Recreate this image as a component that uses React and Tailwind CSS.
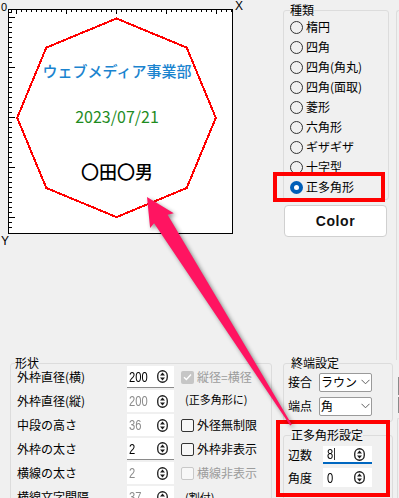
import React from 'react';

const UI = "font-['Noto_Sans_CJK_JP','Noto_Sans_CJK_SC',sans-serif]";

function SpinIcon() {
  return (
    <svg width="11" height="13" viewBox="0 0 11 13">
      <rect x="0.75" y="0.75" width="9.5" height="11.5" rx="4.75" fill="white" stroke="#1a1a1a" strokeWidth="1.3" />
      <path d="M5.5 2.6 L8 5.4 H3 Z" fill="#1a1a1a" />
      <path d="M5.5 10.4 L8 7.6 H3 Z" fill="#1a1a1a" />
    </svg>
  );
}

function SpinBox({ value, disabled = false, underline = false, focus = false, wide = false, small = false, cursor = false }) {
  const size = wide
    ? small
      ? 'w-[49px] h-[18px]'
      : 'w-[49px] h-[19px]'
    : 'w-[47px] h-[22px]';
  const line = focus ? 'border-b-2 border-[#0067c0]' : underline ? 'border-b border-[#8a8a8a]' : '';
  return (
    <div className={`flex shrink-0 items-center bg-white ${size} ${line} ${wide ? 'pl-[4px]' : 'pl-[2px]'}`}>
      <span className="flex-1">
        <span
          className={`inline-flex origin-left scale-x-[0.8] items-center text-[14px] leading-none font-['Liberation_Sans',sans-serif] ${disabled ? 'text-[#8c8c8c]' : 'text-black'}`}
        >
          {value}
          {cursor && <span className="ml-[1px] inline-block h-[12px] w-[1px] bg-black" />}
        </span>
      </span>
      <span className={`flex ${wide ? 'mr-[7px]' : 'mr-[6px]'}`}>
        <SpinIcon />
      </span>
    </div>
  );
}

function CheckBox({ checked = false, disabled = false }) {
  if (checked) {
    return (
      <span className="flex h-[13px] w-[13px] items-center justify-center rounded-[2px] bg-[#c6c6c6]">
        <svg width="9" height="8" viewBox="0 0 9 8">
          <path d="M1 4.2 L3.4 6.5 L8 1.5" fill="none" stroke="white" strokeWidth="1.4" />
        </svg>
      </span>
    );
  }
  return (
    <span
      className={`h-[13px] w-[13px] rounded-[2px] border ${disabled ? 'border-[#c8c8c8] bg-[#f7f7f7]' : 'border-[#333333] bg-[#f7f7f7]'}`}
    />
  );
}

function CheckLabel({ label, checked, disabled }) {
  return (
    <div className="ml-[7px] flex items-center">
      <CheckBox checked={checked} disabled={disabled} />
      <span className={`ml-[3px] leading-[14px] ${disabled ? 'text-[#9c9c9c]' : 'text-black'}`}>{label}</span>
    </div>
  );
}

function ShapeRow({ label, value, disabled, underline, right }) {
  return (
    <div className="flex h-[22px] shrink-0 items-center">
      <span className="w-[110px] shrink-0 leading-[14px]">{label}</span>
      <SpinBox value={value} disabled={disabled} underline={underline} />
      {right}
    </div>
  );
}

function Radio({ label, checked }) {
  return (
    <div className="flex h-[20px] items-center">
      {checked ? (
        <span className="flex h-[13px] w-[13px] items-center justify-center rounded-full bg-[#005fb8]">
          <span className="h-[5px] w-[5px] rounded-full bg-white" />
        </span>
      ) : (
        <span className="h-[13px] w-[13px] rounded-full border border-[#333333]" />
      )}
      <span className="ml-[3px] leading-[14px]">{label}</span>
    </div>
  );
}

function Combo({ text }) {
  return (
    <div className="flex h-[19px] w-[53px] shrink-0 items-center rounded-[2px] border border-[#9a9a9a] bg-white">
      <span className="w-[40px] overflow-hidden whitespace-nowrap pl-[1px] leading-[14px]">{text}</span>
      <svg width="9" height="6" viewBox="0 0 9 6" className="ml-[1px]">
        <path d="M0.5 0.8 L4.5 4.8 L8.5 0.8" fill="none" stroke="#606060" strokeWidth="1" />
      </svg>
    </div>
  );
}

function Canvas() {
  const cx = 116.5;
  const cy = 117.8;
  const r = 99.3;
  const pts = Array.from({ length: 8 }, (_, k) => {
    const a = ((-90 + 45 * k) * Math.PI) / 180;
    return `${(cx + r * Math.cos(a)).toFixed(1)},${(cy + r * Math.sin(a)).toFixed(1)}`;
  }).join(' ');
  const ticks = [];
  for (let x = 11; x <= 231; x += 5) {
    const long = (x - 16) % 50 === 0;
    ticks.push(<line key={'t' + x} x1={x + 0.5} y1={10} x2={x + 0.5} y2={long ? 14 : 12} />);
  }
  for (let y = 12; y <= 231; y += 5) {
    const long = (y - 17) % 50 === 0;
    ticks.push(<line key={'l' + y} x1={9} y1={y + 0.5} x2={long ? 15 : 12} y2={y + 0.5} />);
  }
  return (
    <svg width="250" height="250" viewBox="0 0 250 250" className="block shrink-0">
      <rect x="8.5" y="9.5" width="224" height="224" fill="white" stroke="black" strokeWidth="1" />
      <g stroke="black" strokeWidth="1" shapeRendering="crispEdges">
        {ticks}
      </g>
      <polygon points={pts} fill="none" stroke="#ff0000" strokeWidth="2" shapeRendering="crispEdges" />
      <text x="117" y="77" textAnchor="middle" fontSize="15" fill="#1b84cf" fontWeight="500" fontFamily="'Noto Sans CJK JP', sans-serif">
        ウェブメディア事業部
      </text>
      <text x="117" y="123" textAnchor="middle" fontSize="16" fill="#1f8c1f" fontFamily="'Noto Sans CJK JP', sans-serif">
        2023/07/21
      </text>
      <text x="117" y="179" textAnchor="middle" fontSize="18" fill="#000000" fontWeight="500" fontFamily="'Noto Sans CJK JP', sans-serif">
        〇田〇男
      </text>
      <text x="1" y="11" fontSize="11" fill="black" fontFamily="'Liberation Sans', sans-serif">0</text>
      <text x="235" y="10" fontSize="12" fill="black" fontFamily="'Liberation Sans', sans-serif">X</text>
      <text x="1" y="245" fontSize="12" fill="black" fontFamily="'Liberation Sans', sans-serif">Y</text>
    </svg>
  );
}

const kinds = ['楕円', '四角', '四角(角丸)', '四角(面取)', '菱形', '六角形', 'ギザギザ', '十字型', '正多角形'];

export default function App() {
  return (
    <div className={`relative h-[498px] w-[399px] overflow-hidden bg-[#f0f0f0] text-[12px] text-black ${UI}`}>
      <div className="flex h-full">
        <div className="flex w-[396px] shrink-0 flex-col">
          <div className="flex h-[350px] shrink-0">
            <Canvas />
            <div className="ml-[33px] flex w-[106px] shrink-0 flex-col pt-[3px]">
              <fieldset className="h-[197px] rounded-[3px] border border-[#dcdcdc] pl-[6px]">
                <legend className="px-0 leading-[14px]">種類</legend>
                {kinds.map((t, i) => (
                  <Radio key={t} label={t} checked={i === 8} />
                ))}
              </fieldset>
              <button className="ml-[1px] mt-[5px] flex h-[32px] w-[103px] items-center justify-center rounded-[4px] border border-[#d0d0d0] bg-white font-['Liberation_Sans',sans-serif] text-[14px] font-bold tracking-[0.6px] text-[#111]">
                Color
              </button>
            </div>
          </div>
          <div className="flex">
            <fieldset className="ml-[10px] mt-[7px] h-[150px] w-[262px] shrink-0 rounded-[3px] border border-[#dcdcdc] pl-[6px]">
              <legend className="-ml-[2px] px-0 leading-[12px]">形状</legend>
              <div className="-mt-[3px] flex flex-col gap-[2px]">
                <ShapeRow label="外枠直径(横)" value="200" underline right={<CheckLabel label="縦径=横径" checked disabled />} />
                <ShapeRow
                  label="外枠直径(縦)"
                  value="200"
                  disabled
                  right={<span className="-mt-[5px] ml-[11px] text-[11px] leading-[14px]">(正多角形に)</span>}
                />
                <ShapeRow label="中段の高さ" value="36" disabled right={<CheckLabel label="外径無制限" />} />
                <ShapeRow label="外枠の太さ" value="2" underline right={<CheckLabel label="外枠非表示" />} />
                <ShapeRow label="横線の太さ" value="2" disabled right={<CheckLabel label="横線非表示" disabled />} />
                <ShapeRow
                  label="横線文字間隔"
                  value="37"
                  disabled
                  right={<span className="ml-[11px] text-[11px] leading-[14px]">(割付)</span>}
                />
              </div>
            </fieldset>
            <div className="ml-[11px] mt-[7px] flex w-[110px] shrink-0 flex-col">
              <fieldset className="h-[65px] rounded-[3px] border border-[#dcdcdc] pl-[4px]">
                <legend className="ml-[3px] px-0 leading-[12px]">終端設定</legend>
                <div className="mt-[3px] flex h-[20px] items-center">
                  <span className="w-[31px] shrink-0 leading-[14px]">接合</span>
                  <Combo text="ラウンド" />
                </div>
                <div className="mt-[4px] flex h-[20px] items-center">
                  <span className="w-[31px] shrink-0 leading-[14px]">端点</span>
                  <Combo text="角" />
                </div>
              </fieldset>
              <fieldset className="mt-[7px] h-[80px] rounded-[3px] border border-[#dcdcdc] pl-[4px]">
                <legend className="ml-[3px] px-0 leading-[12px]">正多角形設定</legend>
                <div className="mt-[5px] flex h-[18px] items-center">
                  <span className="w-[35px] shrink-0 leading-[14px]">辺数</span>
                  <SpinBox value="8" wide small focus cursor />
                </div>
                <div className="mt-[4px] flex h-[19px] items-center">
                  <span className="w-[35px] shrink-0 leading-[14px]">角度</span>
                  <SpinBox value="0" wide />
                </div>
              </fieldset>
            </div>
          </div>
        </div>
        <div className="flex w-[3px] shrink-0 flex-col">
          <div className="mt-[10px] h-[350px] shrink-0 rounded-tl-[3px] border-l border-t border-[#dcdcdc]" />
          <div className="ml-[2px] mt-[17px] h-[18px] shrink-0 border-l border-[#8a8a8a]" />
          <div className="ml-[2px] mt-[2px] h-[16px] shrink-0 border-l border-[#8a8a8a]" />
          <div className="ml-[1px] mt-[5px] flex-1 rounded-tl-[3px] border-l border-t border-[#dcdcdc]" />
        </div>
      </div>

      <div className="absolute left-[273px] top-[172px] h-[30px] w-[112px] border-4 border-[#ff0000]" />
      <div className="absolute left-[276px] top-[420px] h-[77px] w-[114px] border-4 border-[#ff0000]" />

      <svg
        className="pointer-events-none absolute left-0 top-0 drop-shadow-[2px_2px_2px_rgba(0,0,0,0.45)]"
        width="399"
        height="498"
        viewBox="0 0 399 498"
      >
        <polygon
          points="147,197 173.8,213.2 167.6,214.7 291.8,424.5 290.2,425.5 154.1,223.2 150.1,228.1"
          fill="#ff1461"
        />
      </svg>
    </div>
  );
}
